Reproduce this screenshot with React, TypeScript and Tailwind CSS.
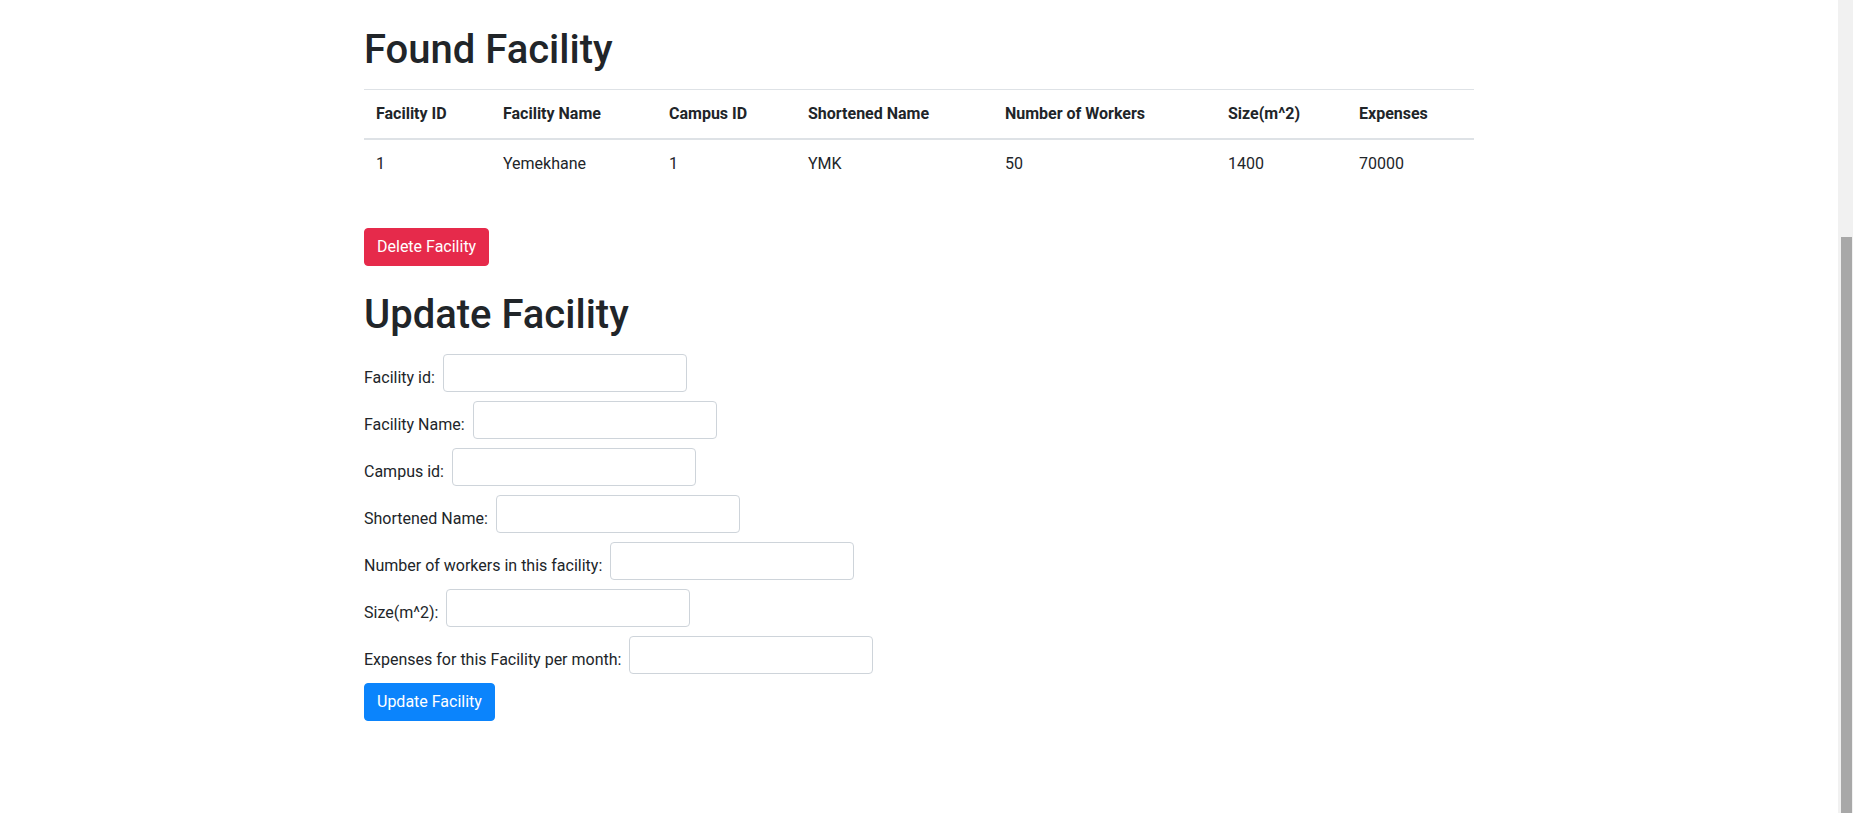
import React from 'react';

const columns = [
  { label: 'Facility ID', width: 'w-[127px]' },
  { label: 'Facility Name', width: 'w-[166px]' },
  { label: 'Campus ID', width: 'w-[139px]' },
  { label: 'Shortened Name', width: 'w-[197px]' },
  { label: 'Number of Workers', width: 'w-[223px]' },
  { label: 'Size(m^2)', width: 'w-[131px]' },
  { label: 'Expenses', width: 'w-[127px]' },
];

const row = ['1', 'Yemekhane', '1', 'YMK', '50', '1400', '70000'];

const fields = [
  'Facility id:',
  'Facility Name:',
  'Campus id:',
  'Shortened Name:',
  'Number of workers in this facility:',
  'Size(m^2):',
  'Expenses for this Facility per month:',
];

const App: React.FC = () => {
  return (
    <div className="flex min-h-screen bg-white text-[#212529] font-['Roboto',sans-serif] text-base">
      <main className="flex-1">
        <div className="w-[1110px] mx-auto pt-[26px] pb-10">
          {/* Found Facility */}
          <h1 className="text-[40px] leading-[48px] font-medium mb-[15px]">Found Facility</h1>

          <table className="w-full table-fixed border-separate border-spacing-0">
            <thead>
              <tr>
                {columns.map(col => (
                  <th
                    key={col.label}
                    className={`${col.width} text-left font-bold px-3 py-3 leading-6 align-bottom border-t border-b-2 border-[#dee2e6]`}
                  >
                    {col.label}
                  </th>
                ))}
              </tr>
            </thead>
            <tbody>
              <tr>
                {row.map((cell, i) => (
                  <td key={i} className="px-3 py-3 leading-6">
                    {cell}
                  </td>
                ))}
              </tr>
            </tbody>
          </table>

          <button className="mt-10 px-3 py-[6px] leading-6 text-base text-white bg-[#e62a4b] border border-[#e62a4b] rounded-[4px]">
            Delete Facility
          </button>

          {/* Update Facility */}
          <h1 className="mt-[25px] text-[40px] leading-[48px] font-medium">Update Facility</h1>

          <form className="mt-[15px] flex flex-col items-start gap-[9px]" onSubmit={e => e.preventDefault()}>
            {fields.map(label => (
              <div key={label} className="flex items-end gap-[8px]">
                <label className="leading-6 pb-[2px]">{label}</label>
                <input
                  type="text"
                  className="w-[244px] h-[38px] px-3 bg-white border border-[#ced4da] rounded-[4px] outline-none"
                />
              </div>
            ))}
            <button
              type="submit"
              className="px-3 py-[6px] leading-6 text-base text-white bg-[#0b84fc] border border-[#0b84fc] rounded-[4px]"
            >
              Update Facility
            </button>
          </form>
        </div>
      </main>

      {/* scrollbar */}
      <div className="w-[15px] bg-[#f1f1f1] flex flex-col">
        <div className="h-[237px]" />
        <div className="flex-1 ml-[3px] mr-[1px] bg-[#a8a8a8]" />
      </div>
    </div>
  );
};

export default App;
